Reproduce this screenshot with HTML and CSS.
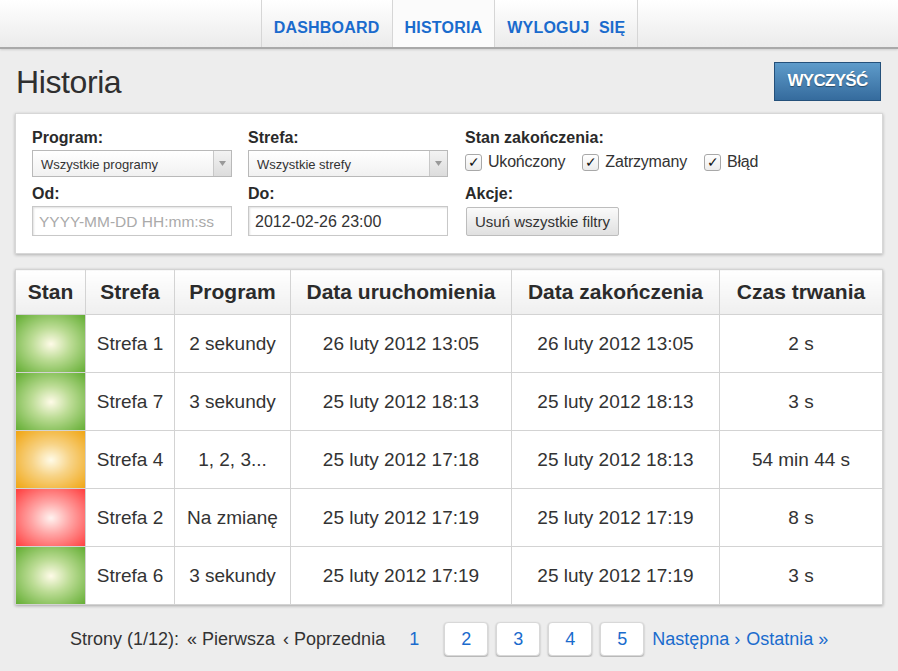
FILE: index.html
```html
<!DOCTYPE html>
<html lang="pl">
<head>
<meta charset="utf-8">
<title>Historia</title>
<link rel="stylesheet" href="styles.css">
</head>
<body>
<nav class="topbar">
  <ul class="menu">
    <li class="menu-item"><a href="#">DASHBOARD</a></li>
    <li class="menu-item active"><a href="#">HISTORIA</a></li>
    <li class="menu-item"><a href="#">WYLOGUJ&nbsp; SIĘ</a></li>
  </ul>
</nav>

<header class="page-head">
  <h1 class="title">Historia</h1>
  <button class="btn-primary">WYCZYŚĆ</button>
</header>

<section class="filters">
  <div class="field">
    <label class="lbl">Program:</label>
    <div class="select"><span>Wszystkie programy</span><span class="arrow"><svg width="7" height="5" viewBox="0 0 7 5"><path d="M0 0h7L3.5 5z" fill="#999"/></svg></span></div>
  </div>
  <div class="field">
    <label class="lbl">Strefa:</label>
    <div class="select"><span>Wszystkie strefy</span><span class="arrow"><svg width="7" height="5" viewBox="0 0 7 5"><path d="M0 0h7L3.5 5z" fill="#999"/></svg></span></div>
  </div>
  <div class="field">
    <label class="lbl">Stan zakończenia:</label>
    <div class="checks">
      <span class="chk"><span class="box">✓</span>Ukończony</span>
      <span class="chk"><span class="box">✓</span>Zatrzymany</span>
      <span class="chk"><span class="box">✓</span>Błąd</span>
    </div>
  </div>
  <div class="field">
    <label class="lbl">Od:</label>
    <input class="inp" type="text" placeholder="YYYY-MM-DD HH:mm:ss">
  </div>
  <div class="field">
    <label class="lbl">Do:</label>
    <input class="inp" type="text" value="2012-02-26 23:00">
  </div>
  <div class="field">
    <label class="lbl">Akcje:</label>
    <button class="btn-light">Usuń wszystkie filtry</button>
  </div>
</section>

<table class="history">
  <thead>
    <tr>
      <th class="c-stan">Stan</th>
      <th class="c-strefa">Strefa</th>
      <th class="c-prog">Program</th>
      <th class="c-start">Data uruchomienia</th>
      <th class="c-end">Data zakończenia</th>
      <th>Czas trwania</th>
    </tr>
  </thead>
  <tbody>
    <tr><td class="st green"></td><td>Strefa 1</td><td>2 sekundy</td><td>26 luty 2012 13:05</td><td>26 luty 2012 13:05</td><td>2 s</td></tr>
    <tr><td class="st green"></td><td>Strefa 7</td><td>3 sekundy</td><td>25 luty 2012 18:13</td><td>25 luty 2012 18:13</td><td>3 s</td></tr>
    <tr><td class="st orange"></td><td>Strefa 4</td><td>1, 2, 3...</td><td>25 luty 2012 17:18</td><td>25 luty 2012 18:13</td><td>54 min 44 s</td></tr>
    <tr><td class="st red"></td><td>Strefa 2</td><td>Na zmianę</td><td>25 luty 2012 17:19</td><td>25 luty 2012 17:19</td><td>8 s</td></tr>
    <tr><td class="st green"></td><td>Strefa 6</td><td>3 sekundy</td><td>25 luty 2012 17:19</td><td>25 luty 2012 17:19</td><td>3 s</td></tr>
  </tbody>
</table>

<div class="pager">
  <span class="pg-text">Strony (1/12):</span>
  <span class="pg-text">« Pierwsza</span>
  <span class="pg-text">‹ Poprzednia</span>
  <span class="pg-cur">1</span>
  <a class="pg-box" href="#">2</a>
  <a class="pg-box" href="#">3</a>
  <a class="pg-box" href="#">4</a>
  <a class="pg-box" href="#">5</a>
  <a class="pg-link" href="#">Następna ›</a>
  <a class="pg-link" href="#">Ostatnia »</a>
</div>
</body>
</html>
```

FILE: styles.css
```css
* { box-sizing: border-box; }
body {
  margin: 0;
  background: #ededed;
  font-family: "Liberation Sans", Arial, sans-serif;
  color: #333;
}
.topbar {
  height: 49px;
  background: linear-gradient(#ffffff, #ebebeb);
  border-bottom: 2px solid #a9a9a9;
  box-shadow: 0 1px 2px rgba(0,0,0,0.12);
  display: flex;
  justify-content: center;
}
.menu {
  list-style: none;
  margin: 0;
  padding: 0 0 0 1px;
  display: flex;
  border-right: 1px solid #d6d6d6;
}
.menu-item {
  border-left: 1px solid #d6d6d6;
  display: flex;
}
.menu-item a {
  display: flex;
  align-items: center;
  padding: 8px 12px 0;
  font-weight: bold;
  font-size: 16px;
  letter-spacing: 0.2px;
  color: #1a6bcd;
  text-decoration: none;
}
.menu-item.active { background: #fbfbfb; }
.page-head {
  display: flex;
  justify-content: space-between;
  align-items: center;
  padding: 0 17px 0 16px;
  height: 64px;
}
.title {
  margin: 3px 0 0;
  font-weight: normal;
  font-size: 32px;
  color: #2f2f2f;
  letter-spacing: -0.4px;
}
.btn-primary {
  width: 107px;
  height: 39px;
  border: 1px solid #24507a;
  background: linear-gradient(#5e9bca, #356b9d);
  color: #fff;
  font-family: "Liberation Sans", Arial, sans-serif;
  font-weight: bold;
  font-size: 17px;
  letter-spacing: -0.7px;
  text-shadow: 0 1px 1px rgba(0,0,0,0.4);
  padding: 0;
}
.filters {
  margin: 0 15px;
  height: 141px;
  background: #fff;
  border: 1px solid #d7d7d7;
  box-shadow: 0 1px 3px rgba(0,0,0,0.25);
  display: grid;
  grid-template-columns: 216px 217px 1fr;
  grid-template-rows: 56px 60px;
  padding: 14px 16px 0;
}
.field { display: flex; flex-direction: column; align-items: flex-start; }
.lbl {
  font-weight: bold;
  font-size: 16px;
  line-height: 19px;
  color: #2a2a2a;
  margin-bottom: 3px;
}
.select {
  width: 200px;
  height: 27px;
  border: 1px solid #b9b9b9;
  background: linear-gradient(#ffffff, #f1f1f1);
  display: flex;
  justify-content: space-between;
  align-items: stretch;
  font-size: 13px;
  color: #333;
}
.select span:first-child { padding: 6px 0 0 8px; }
.arrow {
  width: 18px;
  border-left: 1px solid #c8c8c8;
  background: linear-gradient(#f3f3f3, #dcdcdc);
  display: flex;
  align-items: center;
  justify-content: center;
}
.inp {
  width: 200px;
  height: 30px;
  border: 1px solid #c8c8c8;
  box-shadow: inset 1px 1px 2px rgba(0,0,0,0.12);
  padding: 2px 6px 0;
  font-family: "Liberation Sans", Arial, sans-serif;
  font-size: 16px;
  color: #333;
  outline: none;
}
.inp::placeholder { color: #aaa; font-size: 15.5px; }
.checks { display: flex; gap: 17px; margin-top: 3px; }
.chk {
  display: flex;
  align-items: center;
  gap: 6px;
  font-size: 16px;
  letter-spacing: -0.2px;
  color: #333;
}
.box {
  width: 17px;
  height: 17px;
  border: 1px solid #a8a8a8;
  border-radius: 3px;
  background: linear-gradient(#ffffff, #ececec);
  font-size: 14px;
  line-height: 15px;
  text-align: center;
  color: #111;
}
.btn-light {
  margin-top: 1px;
  margin-left: 1px;
  height: 29px;
  padding: 0 8px;
  border: 1px solid #bdbdbd;
  border-radius: 2px;
  background: linear-gradient(#fafafa, #e0e0e0);
  font-family: "Liberation Sans", Arial, sans-serif;
  font-size: 15px;
  color: #333;
}
.history {
  margin: 15px 15px 0;
  width: 868px;
  border-collapse: collapse;
  background: #fff;
  box-shadow: 0 1px 3px rgba(0,0,0,0.3);
  font-size: 19px;
}
.history th, .history td {
  border: 1px solid #d3d3d3;
  text-align: center;
}
.history th {
  height: 45px;
  font-size: 21px;
  font-weight: bold;
  color: #2b2b2b;
  background: linear-gradient(#ffffff, #efefef);
  padding: 0;
}
.history td { height: 58px; color: #333; padding: 0; }
.c-stan { width: 70px; }
.c-strefa { width: 89px; }
.c-prog { width: 116px; }
.c-start { width: 221px; }
.c-end { width: 208px; }
.st.green { background: radial-gradient(ellipse at center, #fffbe8 0%, #bcdc95 40%, #62ad32 100%); }
.st.orange { background: radial-gradient(ellipse at center, #fffbe8 0%, #f7d386 40%, #f0a512 100%); }
.st.red { background: radial-gradient(ellipse at center, #fff3f0 0%, #ffa5a5 40%, #ff3e3e 100%); }
.pager {
  display: flex;
  align-items: center;
  justify-content: flex-start;
  margin-top: 16px;
  padding-left: 70px;
  font-size: 18px;
  height: 36px;
}
.pg-text { color: #333; margin-right: 8px; }
.pg-cur { color: #1a6bcd; margin: 0 25px 0 16px; }
.pg-box {
  width: 44px;
  height: 34px;
  background: #fff;
  border: 1px solid #d8d8d8;
  border-radius: 4px;
  box-shadow: 0 1px 2px rgba(0,0,0,0.3);
  color: #1a6bcd;
  text-decoration: none;
  display: flex;
  align-items: center;
  justify-content: center;
  margin-right: 8px;
}
.pg-link { color: #1a6bcd; text-decoration: none; margin-right: 6px; }
.pg-link:last-child { margin-right: 0; }
```
